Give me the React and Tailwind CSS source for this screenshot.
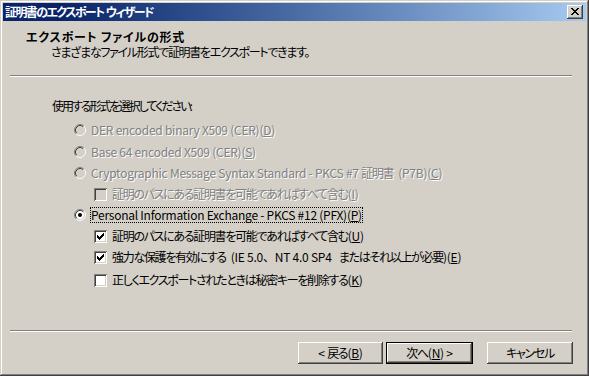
import React from "react";

// Win2000 classic colours
// face #d4d0c8, shadow #808080, dark #404040, highlight #ffffff

const font = "font-['Noto_Sans_CJK_JP',sans-serif] [font-feature-settings:'palt'] tracking-[-0.25px]";

// japanese runs are narrower in the original (MS UI Gothic)
function J({ children }) {
  return <span className="tracking-[-1.3px]">{children}</span>;
}

function Radio({ checked, disabled }) {
  return (
    <svg width="12" height="12" viewBox="0 0 12 12" className="shrink-0">
      <circle cx="6" cy="6" r="4.2" fill={disabled ? "#d4d0c8" : "#ffffff"} />
      <path d="M2.11 9.89A5.5 5.5 0 0 1 9.89 2.11" fill="none" stroke="#808080" />
      <path d="M9.89 2.11A5.5 5.5 0 0 1 2.11 9.89" fill="none" stroke="#ffffff" />
      <path d="M2.82 9.18A4.5 4.5 0 0 1 9.18 2.82" fill="none" stroke="#404040" />
      <path d="M9.18 2.82A4.5 4.5 0 0 1 2.82 9.18" fill="none" stroke="#d4d0c8" />
      {checked && <circle cx="6" cy="6" r="2" fill="#000000" />}
    </svg>
  );
}

function Check({ checked, disabled }) {
  return (
    <div
      className={
        "w-[13px] h-[13px] shrink-0 shadow-[inset_1px_1px_#808080,inset_-1px_-1px_#ffffff,inset_2px_2px_#404040,inset_-2px_-2px_#d4d0c8] " +
        (disabled ? "bg-[#d4d0c8]" : "bg-white")
      }
    >
      {checked && (
        <svg width="13" height="13" viewBox="0 0 13 13" shapeRendering="crispEdges">
          <path
            d="M9 3h1v1h-1zM8 4h2v1h-2zM3 5h1v1h-1zM7 5h3v1h-3zM3 6h2v1h-2zM6 6h3v1h-3zM3 7h5v1h-5zM4 8h3v1h-3zM5 9h1v1h-1z"
            fill="#000000"
          />
        </svg>
      )}
    </div>
  );
}

function Label({ children, disabled, focus }) {
  return (
    <span
      className={
        "ml-[4px] border leading-[14px] whitespace-pre " +
        (focus ? "border-dotted border-black " : "border-transparent ") +
        (disabled ? "text-[#808080] [text-shadow:1px_1px_0_#ffffff]" : "text-black")
      }
    >
      {children}
    </span>
  );
}

function Key({ k }) {
  return (
    <>
      (<span className="underline underline-offset-1">{k}</span>)
    </>
  );
}

function Etched() {
  return (
    <div className="ml-[7px] mr-[14px]">
      <div className="h-px bg-[#808080]" />
      <div className="h-px bg-white" />
    </div>
  );
}

function Button({ w, isDefault, children }) {
  return (
    <div
      className={
        "h-[22px] flex items-center justify-center bg-[#d4d0c8] text-black leading-[14px] whitespace-pre " +
        w +
        (isDefault
          ? " border border-black shadow-[inset_-1px_-1px_#404040,inset_1px_1px_#ffffff,inset_-2px_-2px_#808080]"
          : " shadow-[inset_-1px_-1px_#404040,inset_1px_1px_#ffffff,inset_-2px_-2px_#808080,inset_2px_2px_#d4d0c8]")
      }
    >
      {children}
    </div>
  );
}

export default function App() {
  return (
    <div
      className={
        "w-[589px] h-[376px] p-[3px] flex flex-col bg-[#d4d0c8] text-[12px] shadow-[inset_-1px_-1px_#404040,inset_1px_1px_#d4d0c8,inset_-2px_-2px_#808080,inset_2px_2px_#ffffff] " +
        font
      }
    >
      {/* title bar */}
      <div className="h-[18px] flex items-center bg-linear-to-r from-[#0a246a] from-10% to-[#a6caf0]">
        <span className="pl-[2px] text-white font-bold leading-[14px] whitespace-pre tracking-[-1.6px]">
          証明書のエクスポート  ウィザード
        </span>
        <div className="ml-auto mr-[3px] w-[16px] h-[14px] bg-[#d4d0c8] shadow-[inset_-1px_-1px_#404040,inset_1px_1px_#ffffff,inset_-2px_-2px_#808080,inset_2px_2px_#d4d0c8]">
          <svg width="16" height="14" viewBox="0 0 16 14" shapeRendering="crispEdges">
            <path
              d="M4 3h2v1h-2zM10 3h2v1h-2zM5 4h2v1h-2zM9 4h2v1h-2zM6 5h4v1h-4zM7 6h2v1h-2zM6 7h4v1h-4zM5 8h2v1h-2zM9 8h2v1h-2zM4 9h2v1h-2zM10 9h2v1h-2z"
              fill="#000000"
            />
          </svg>
        </div>
      </div>

      {/* header */}
      <div className="pl-[23px] pt-[9px]">
        <div className="font-bold leading-[14px] whitespace-pre tracking-[0.8px]">エクスポート ファイルの形式</div>
        <div className="ml-[25px] mt-px leading-[14px]">
          <J>さまざまなファイル形式で証明書をエクスポートできます。</J>
        </div>
      </div>
      <div className="mt-[16px]">
        <Etched />
      </div>

      {/* body */}
      <div className="pl-[49px] mt-[22px] leading-[14px] tracking-[-2px]">使用する形式を選択してください:</div>

      <div className="mt-[6px] flex flex-col">
        <div className="h-[22px] pl-[71px] flex items-center">
          <Radio disabled />
          <Label disabled>
            DER encoded binary X509 (CER)<Key k="D" />
          </Label>
        </div>
        <div className="h-[22px] pl-[71px] flex items-center">
          <Radio disabled />
          <Label disabled>
            Base 64 encoded X509 (CER)<Key k="S" />
          </Label>
        </div>
        <div className="h-[20px] pl-[71px] flex items-center">
          <Radio disabled />
          <Label disabled>
            Cryptographic Message Syntax Standard - PKCS #7 <J>証明書</J>  (P7B)<Key k="C" />
          </Label>
        </div>
        <div className="h-[22px] pl-[91px] flex items-center">
          <Check disabled />
          <Label disabled>
            <J>証明のパスにある証明書を可能であればすべて含む</J>
            <Key k="I" />
          </Label>
        </div>
        <div className="h-[20px] pl-[71px] flex items-center">
          <Radio checked />
          <Label focus>
            Personal Information Exchange - PKCS #12 (PFX)<Key k="P" />
          </Label>
        </div>
        <div className="h-[22px] pl-[91px] flex items-center">
          <Check checked />
          <Label>
            <J>証明のパスにある証明書を可能であればすべて含む</J>
            <Key k="U" />
          </Label>
        </div>
        <div className="h-[20px] pl-[91px] flex items-center">
          <Check checked />
          <Label>
            <J>強力な保護を有効にする</J>  (IE 5.0<span className="[font-feature-settings:normal]">、</span>NT 4.0 SP4   <J>またはそれ以上が必要</J>)<Key k="E" />
          </Label>
        </div>
        <div className="h-[26px] pl-[91px] flex items-center">
          <Check />
          <Label>
            <J>正しくエクスポートされたときは秘密キーを削除する</J>
            <Key k="K" />
          </Label>
        </div>
      </div>

      {/* footer */}
      <div className="mt-auto">
        <Etched />
        <div className="mt-[10px] mb-[9px] pr-[13px] flex justify-end">
          <Button w="w-[85px]">
            {"< "}
            <J>戻る</J>
            <Key k="B" />
          </Button>
          <div className="w-[3px]" />
          <Button w="w-[87px]" isDefault>
            <J>次へ</J>
            <Key k="N" />
            {" >"}
          </Button>
          <div className="w-[14px]" />
          <Button w="w-[86px]">
            <J>キャンセル</J>
          </Button>
        </div>
      </div>
    </div>
  );
}
